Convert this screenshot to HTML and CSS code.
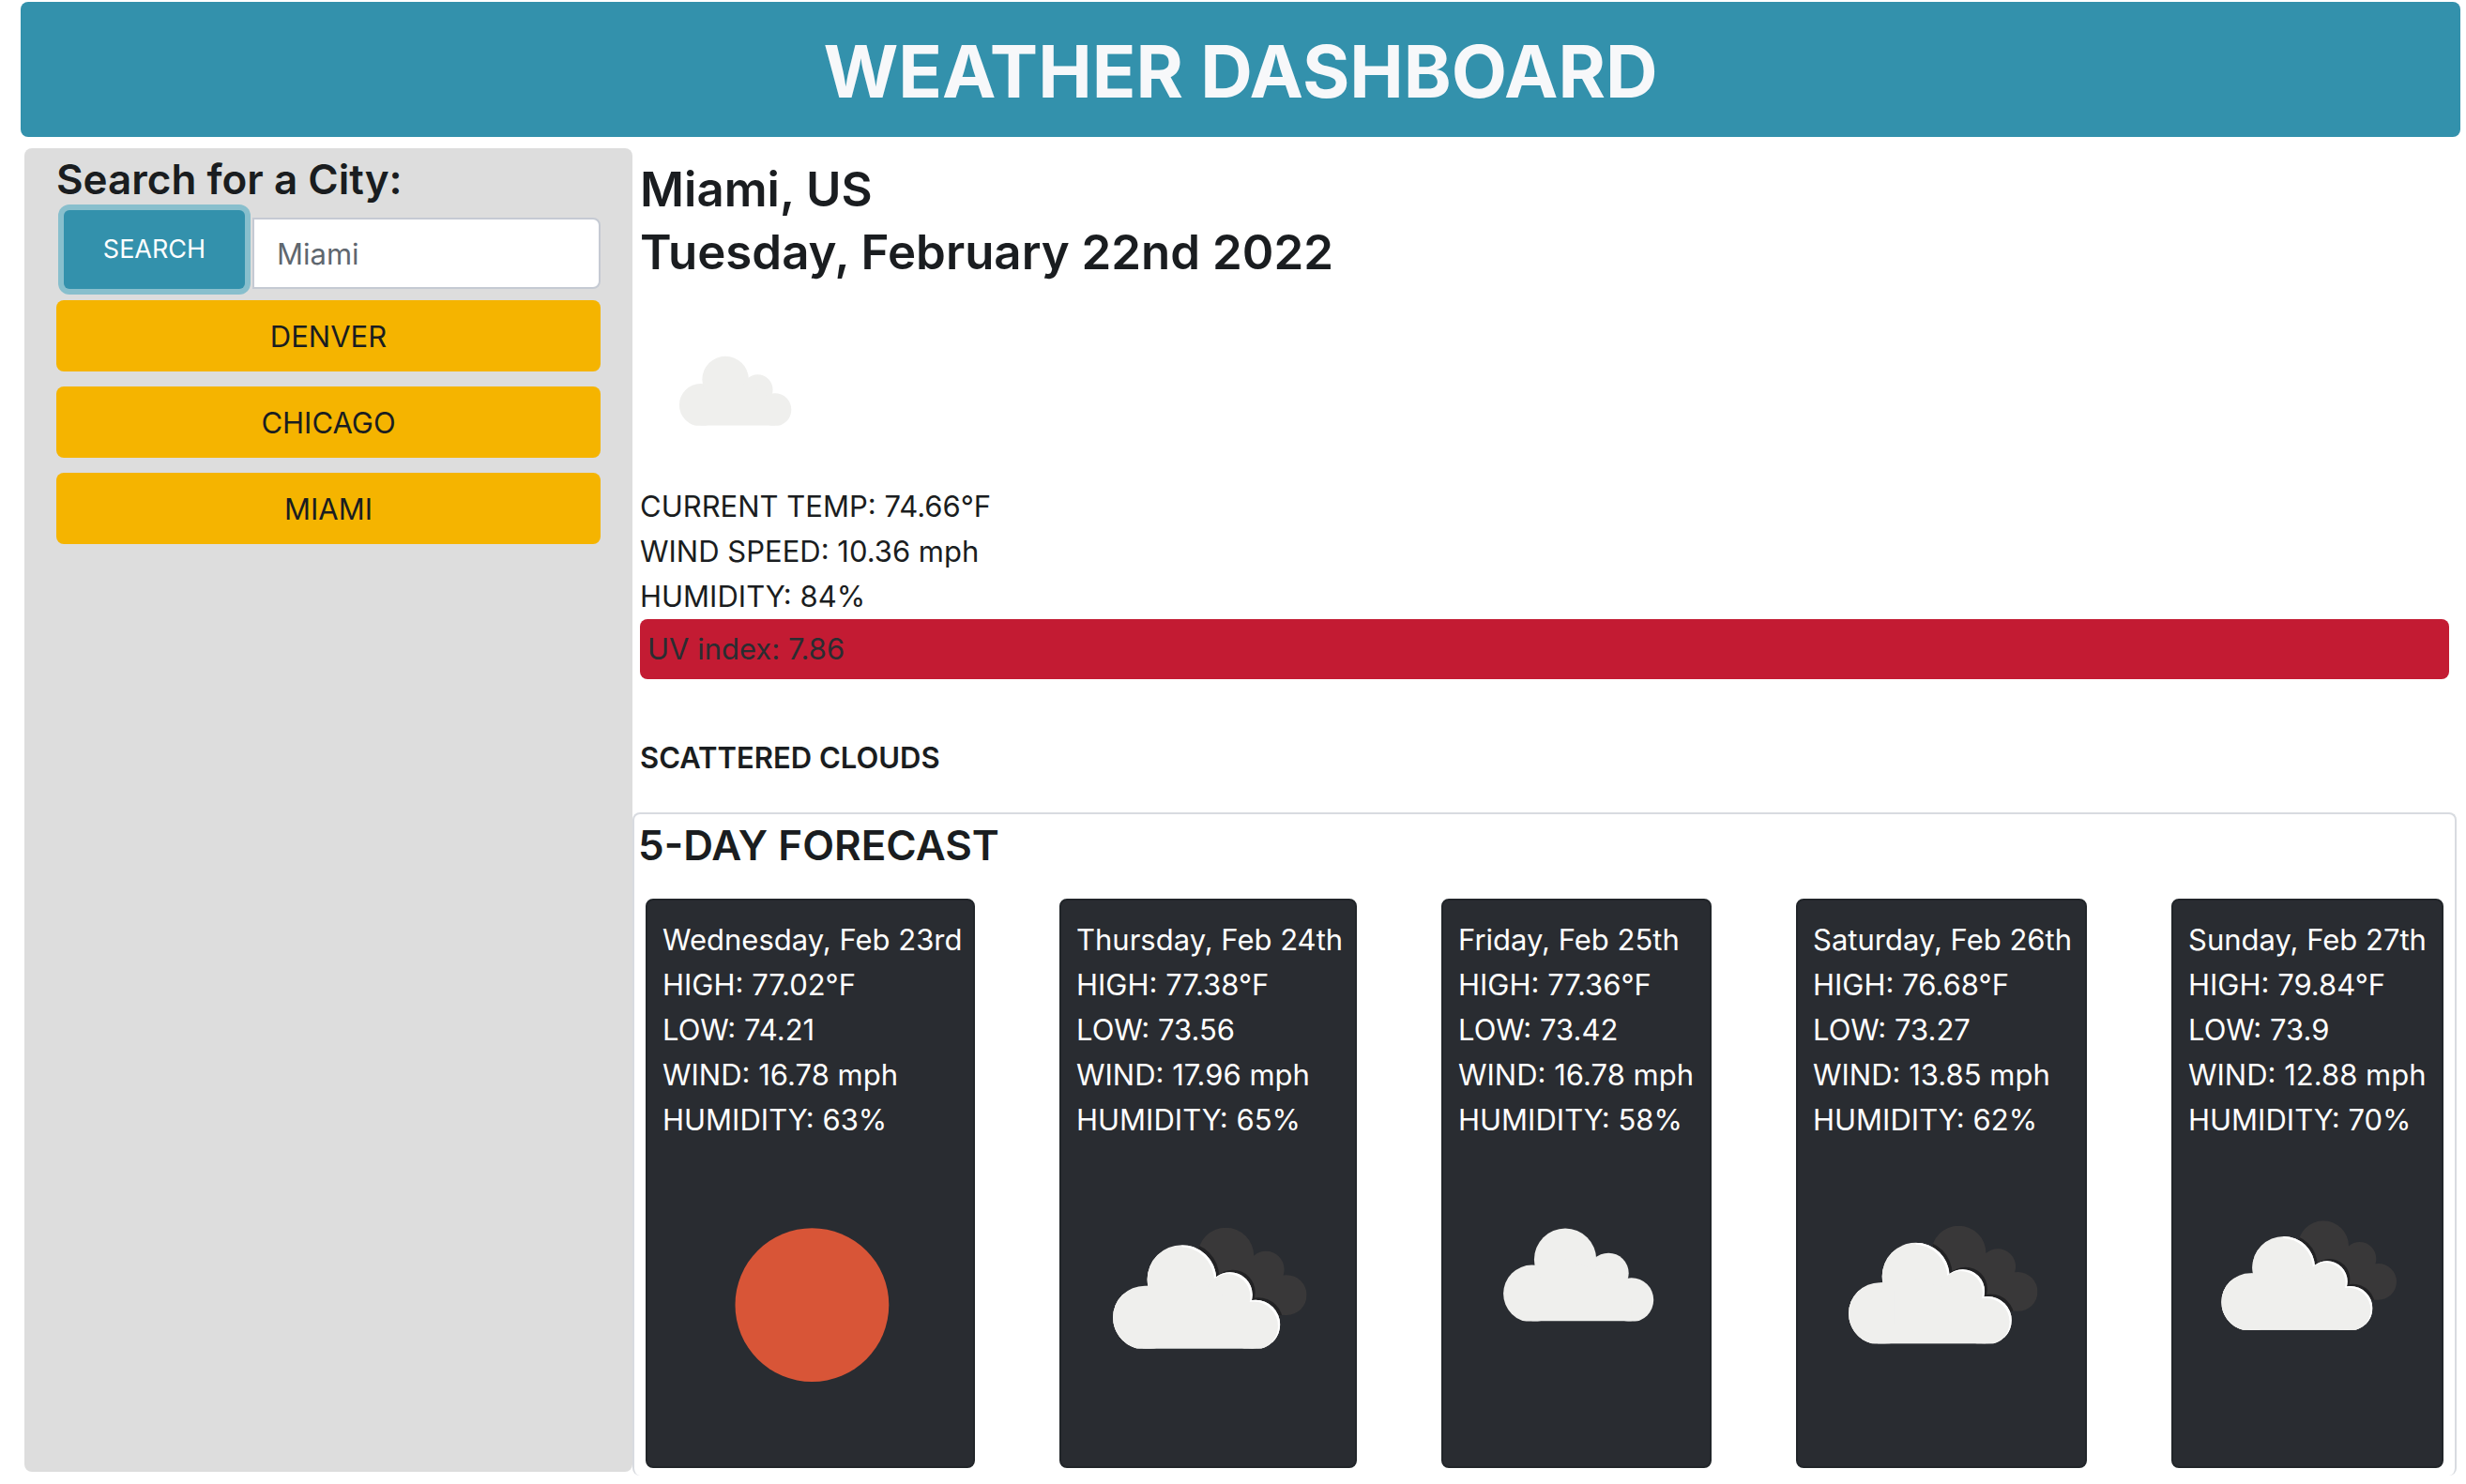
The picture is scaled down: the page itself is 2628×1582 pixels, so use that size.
FILE: index.html
```html
<!DOCTYPE html>
<html lang="en">
<head>
  <meta charset="utf-8">
  <meta name="viewport" content="width=device-width, initial-scale=1">
  <title>Weather Dashboard</title>
  <link rel="stylesheet" href="styles.css">
</head>
<body>
  <svg class="sprite" aria-hidden="true">
    <defs>
      <clipPath id="cloud-base"><rect x="0" y="0" width="762" height="557"/></clipPath>
      <clipPath id="cloud-clip" clip-path="url(#cloud-base)">
        <circle cx="198" cy="468" r="92"/>
        <circle cx="305" cy="358" r="100"/>
        <circle cx="444" cy="402" r="65"/>
        <circle cx="518" cy="488" r="71"/>
        <path d="M198 557V444L305 358L444 402L518 488V557Z"/>
      </clipPath>
      <clipPath id="back-clip">
        <circle cx="432" cy="289" r="81"/>
        <circle cx="548" cy="329" r="53"/>
        <circle cx="608" cy="403" r="58"/>
        <path d="M380 350L432 289L548 329L608 403L598 461L480 470Z"/>
      </clipPath>
      <g id="cloud-shape" clip-path="url(#cloud-base)">
        <circle cx="198" cy="468" r="92"/>
        <circle cx="305" cy="358" r="100"/>
        <circle cx="444" cy="402" r="65"/>
        <circle cx="518" cy="488" r="71"/>
        <path d="M198 557V444L305 358L444 402L518 488V557Z"/>
      </g>
      <symbol id="icon-clear" viewBox="0 0 100 100">
        <circle cx="50.6" cy="50.5" r="26" fill="#d85537"/>
      </symbol>
      <symbol id="icon-cloud" viewBox="0 0 564 564">
        <g fill="#efefed">
          <use href="#cloud-shape" transform="translate(29 -18) scale(.742)"/>
        </g>
      </symbol>
      <symbol id="icon-broken" viewBox="0 0 762 762">
        <g clip-path="url(#back-clip)">
          <rect width="762" height="762" fill="#393839"/>
          <use href="#cloud-shape" fill="#222224" transform="translate(8 -7)"/>
        </g>
        <use href="#cloud-shape" fill="#efefed"/>
        <g clip-path="url(#cloud-clip)">
          <path d="M305 258H620V540H305Z" fill="#fff"/>
          <use href="#cloud-shape" fill="#efefed" transform="translate(-6 5)"/>
          <path d="M100 400H240V557H100ZM190 500H540V557H190Z" fill="#efefed"/>
        </g>
      </symbol>
    </defs>
  </svg>

  <header class="banner">
    <h1 class="banner-title">WEATHER DASHBOARD</h1>
  </header>

  <div class="layout">
    <aside class="sidebar">
      <h3 class="section-title"><label for="city">Search for a City:</label></h3>
      <form class="search">
        <button class="search-button" type="button">SEARCH</button>
        <input class="search-input" id="city" type="text" placeholder="Miami">
      </form>
      <div class="history">
        <button class="history-button" type="button">DENVER</button>
        <button class="history-button" type="button">CHICAGO</button>
        <button class="history-button" type="button">MIAMI</button>
      </div>
    </aside>

    <main class="content">
      <section class="current">
        <h2 class="current-title">Miami, US<br>Tuesday, February 22nd 2022</h2>
        <svg class="current-icon" role="img" aria-label="Scattered clouds"><use href="#icon-cloud"/></svg>
        <p>CURRENT TEMP: 74.66°F</p>
        <p>WIND SPEED: 10.36 mph</p>
        <p>HUMIDITY: 84%</p>
        <p class="uv">UV index: 7.86</p>
        <h5 class="summary">SCATTERED CLOUDS</h5>
      </section>

      <section class="forecast">
        <h3 class="section-title">5-DAY FORECAST</h3>
        <div class="days">
          <article class="day">
            <p>Wednesday, Feb 23rd</p>
            <p>HIGH: 77.02°F</p>
            <p>LOW: 74.21</p>
            <p>WIND: 16.78 mph</p>
            <p>HUMIDITY: 63%</p>
            <svg class="day-icon" role="img" aria-label="Clear"><use href="#icon-clear"/></svg>
          </article>
          <article class="day">
            <p>Thursday, Feb 24th</p>
            <p>HIGH: 77.38°F</p>
            <p>LOW: 73.56</p>
            <p>WIND: 17.96 mph</p>
            <p>HUMIDITY: 65%</p>
            <svg class="day-icon" role="img" aria-label="Broken clouds"><use href="#icon-broken"/></svg>
          </article>
          <article class="day">
            <p>Friday, Feb 25th</p>
            <p>HIGH: 77.36°F</p>
            <p>LOW: 73.42</p>
            <p>WIND: 16.78 mph</p>
            <p>HUMIDITY: 58%</p>
            <svg class="day-icon" role="img" aria-label="Scattered clouds"><use href="#icon-cloud"/></svg>
          </article>
          <article class="day">
            <p>Saturday, Feb 26th</p>
            <p>HIGH: 76.68°F</p>
            <p>LOW: 73.27</p>
            <p>WIND: 13.85 mph</p>
            <p>HUMIDITY: 62%</p>
            <svg class="day-icon" role="img" aria-label="Broken clouds"><use href="#icon-broken"/></svg>
          </article>
          <article class="day">
            <p>Sunday, Feb 27th</p>
            <p>HIGH: 79.84°F</p>
            <p>LOW: 73.9</p>
            <p>WIND: 12.88 mph</p>
            <p>HUMIDITY: 70%</p>
            <svg class="day-icon" role="img" aria-label="Broken clouds"><use href="#icon-broken"/></svg>
          </article>
        </div>
      </section>
    </main>
  </div>
</body>
</html>
```
FILE: styles.css
```css
* {
  box-sizing: border-box;
}

body {
  margin: 0;
  padding: 2px 6px 0 22px;
  background: #fff;
  color: #1a1d20;
  font-family: Inter, "Liberation Sans", sans-serif;
  font-size: 31px;
  line-height: 48px;
}

h1, h2, h3, h5, p {
  margin: 0;
}

button, input {
  font: inherit;
}

.sprite {
  display: block;
  width: 0;
  height: 0;
}

.banner {
  padding: 26px 24px 22px;
  border-radius: 8px;
  background: #3391ac;
  color: #f7f8fa;
  text-align: center;
}

.banner-title {
  font-size: 77px;
  font-weight: 700;
  line-height: 96px;
}

.layout {
  display: grid;
  grid-template-columns: minmax(0, 1fr) minmax(0, 3fr);
  padding: 12px 4px 0;
}

.sidebar {
  margin-bottom: 4px;
  padding: 4px 34px;
  border-radius: 8px;
  background: #ddd;
}

.section-title {
  font-size: 44px;
  font-weight: 600;
  line-height: 58px;
}

.search {
  display: flex;
  align-items: flex-end;
  gap: 8px;
  margin: 4px 0 12px;
  padding-left: 8px;
}

.search-button {
  width: 193px;
  height: 84px;
  padding: 0;
  border: 0;
  border-radius: 6px;
  background: #3391ac;
  box-shadow: 0 0 0 6px #88bfcd;
  color: #fff;
  font-size: 27px;
}

.search-input {
  flex: 1;
  min-width: 0;
  height: 76px;
  padding: 0 24px;
  border: 2px solid #c5cad3;
  border-radius: 0 8px 8px 0;
  background: #fff;
  color: #1a1d20;
}

.search-input::placeholder {
  color: #5f676f;
  opacity: 1;
}

.history {
  display: grid;
  gap: 16px;
}

.history-button {
  height: 76px;
  padding: 2px 0 0;
  border: 0;
  border-radius: 8px;
  background: #f5b400;
  color: #1a1d20;
}

.current {
  padding: 10px 8px 38px;
}

.current-title {
  font-size: 51px;
  font-weight: 600;
  line-height: 67px;
}

.current-icon {
  display: block;
  width: 200px;
  height: 200px;
  margin-top: 14px;
  padding: 6px;
}

.uv {
  padding: 8px;
  border-radius: 8px;
  background: #c31b33;
  color: #2a2d31;
}

.summary {
  margin-top: 64px;
  font-size: 31px;
  font-weight: 600;
  line-height: 40px;
}

.forecast {
  padding: 4px 4px 8px;
  border: 2px solid #d8dbe0;
  border-bottom: 0;
  border-radius: 8px;
}

.days {
  display: grid;
  grid-template-columns: 351fr 317fr 288fr 310fr 290fr;
  gap: 90px;
  margin-top: 28px;
  padding: 0 8px;
}

.day {
  min-width: 0;
  padding: 18px 16px 16px;
  border: 2px solid #212529;
  border-radius: 8px;
  background: #292c31;
  color: #fff;
  white-space: nowrap;
}

.day-icon {
  display: block;
  width: 100%;
  height: auto;
  aspect-ratio: 1;
  margin-top: 14px;
}
```
